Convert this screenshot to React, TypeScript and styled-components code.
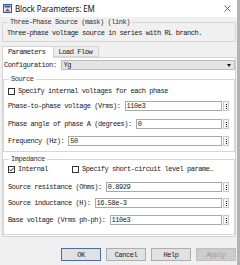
import React from "react";
import styled, { createGlobalStyle } from "styled-components";

const mono = `"Liberation Mono", "DejaVu Sans Mono", monospace`;

const GlobalStyle = createGlobalStyle`
  html, body {
    margin: 0;
    padding: 0;
    background: #f0f0f0;
  }
  body {
    width: 240px;
    height: 265px;
    overflow: hidden;
    font-family: ${mono};
    color: #1a1a1a;
  }
`;

const Window = styled.div`
  width: 240px;
  height: 265px;
  box-sizing: border-box;
  border-right: 3px solid #b3b3b3;
  display: flex;
  flex-direction: column;
  background: #f0f0f0;
`;

const TitleBar = styled.div`
  height: 17px;
  background: #ffffff;
  display: flex;
  align-items: center;
  padding: 0 6px 0 3px;
  gap: 3px;
`;

const TitleText = styled.div`
  flex: 1;
  font-family: "Noto Sans", "Liberation Sans", sans-serif;
  font-size: 8px;
  color: #111;
  letter-spacing: -0.1px;
`;

const Close = styled.div`
  width: 7px;
  height: 7px;
  display: flex;
`;

const Body = styled.div`
  flex: 1;
  display: flex;
  flex-direction: column;
  padding: 0 1px 0 2px;
`;

const Group = styled.fieldset<{ mt: number; pb: number }>`
  margin: ${({ mt }) => mt}px 0 0 0;
  padding: 0 5px ${({ pb }) => pb}px 4px;
  border: 1px solid #d6d6d6;
  min-width: 0;
  display: flex;
  flex-direction: column;
`;

const Legend = styled.legend`
  font-size: 7px;
  letter-spacing: -0.45px;
  line-height: 8px;
  padding: 0 2px;
  margin-left: 1px;
  color: #333;
`;

const Text = styled.div<{ mt?: number }>`
  font-size: 7px;
  letter-spacing: -0.45px;
  line-height: 10px;
  margin-top: ${({ mt }) => mt ?? 0}px;
  white-space: nowrap;
`;

const TabRow = styled.div`
  display: flex;
  margin-top: 4px;
  height: 11px;
  position: relative;
  z-index: 1;
`;

const Tab = styled.div<{ active?: boolean }>`
  height: ${({ active }) => (active ? 12 : 11)}px;
  box-sizing: border-box;
  padding: 0 ${({ active }) => (active ? 7 : 6)}px 0 5px;
  font-size: 7px;
  letter-spacing: -0.45px;
  line-height: 11px;
  background: ${({ active }) => (active ? "#ffffff" : "#ececec")};
  border: 1px solid #d6d6d6;
  border-bottom: ${({ active }) => (active ? "none" : "1px solid #d6d6d6")};
  margin-left: ${({ active }) => (active ? 0 : -1)}px;
`;

const Pane = styled.div`
  height: 180px;
  box-sizing: border-box;
  background: #ffffff;
  border: 1px solid #d6d6d6;
  padding: 1px 0 0 0;
  display: flex;
  flex-direction: column;
`;

const Row = styled.div<{ mt: number }>`
  display: flex;
  align-items: center;
  height: 10px;
  margin-top: ${({ mt }) => mt}px;
  white-space: nowrap;
`;

const Label = styled.span`
  font-size: 7px;
  letter-spacing: -0.45px;
  line-height: 10px;
  margin-right: 4px;
`;

const Select = styled.div`
  flex: 1;
  height: 10px;
  box-sizing: border-box;
  background: #e4e4e4;
  border: 1px solid #bcbcbc;
  display: flex;
  align-items: center;
  justify-content: space-between;
  padding: 0 3px 0 2px;
  font-size: 7px;
  letter-spacing: -0.45px;
`;

const Field = styled.div`
  flex: 1;
  height: 10px;
  box-sizing: border-box;
  background: #ffffff;
  border: 1px solid #a9a9a9;
  padding-left: 1px;
  font-size: 7px;
  letter-spacing: -0.45px;
  line-height: 8px;
`;

const Dots = styled.div`
  width: 6px;
  height: 10px;
  box-sizing: border-box;
  margin-left: 1px;
  border: 1px solid #c8c8c8;
  background: #f4f4f4;
  display: flex;
  flex-direction: column;
  align-items: center;
  justify-content: center;
  gap: 1px;
`;

const Dot = styled.span`
  width: 1px;
  height: 1px;
  background: #111;
`;

const Box = styled.span`
  width: 7px;
  height: 7px;
  box-sizing: border-box;
  border: 1px solid #333;
  background: #fff;
  margin-right: 3px;
  display: inline-flex;
  align-items: center;
  justify-content: center;
`;

const Check = ({ checked }: { checked?: boolean }) => (
  <Box>
    {checked && (
      <svg width="5" height="5" viewBox="0 0 5 5">
        <path d="M0.5 2.5 L2 4 L4.5 0.8" stroke="#222" strokeWidth="0.9" fill="none" />
      </svg>
    )}
  </Box>
);

const Spacer = styled.span<{ w: number }>`
  width: ${({ w }) => w}px;
  flex: none;
`;

const Buttons = styled.div`
  display: flex;
  justify-content: flex-end;
  gap: 5px;
  margin-top: 11px;
`;

const Button = styled.div<{ primary?: boolean; disabled?: boolean }>`
  width: 40px;
  height: 13px;
  box-sizing: border-box;
  background: ${({ disabled }) => (disabled ? "#cccccc" : "#e1e1e1")};
  border: 1px solid ${({ primary, disabled }) => (primary ? "#4a6f9c" : disabled ? "#bfbfbf" : "#adadad")};
  color: ${({ disabled }) => (disabled ? "#9a9a9a" : "#222")};
  font-size: 7px;
  letter-spacing: -0.45px;
  display: flex;
  align-items: center;
  justify-content: center;
`;

const Param = ({ label, value, mt }: { label: string; value: string; mt: number }) => (
  <Row mt={mt}>
    <Label>{label}</Label>
    <Field>{value}</Field>
    <Dots>
      <Dot />
      <Dot />
      <Dot />
    </Dots>
  </Row>
);

const AppIcon = () => (
  <svg width="9" height="9" viewBox="0 0 9 9">
    <rect x="0.5" y="0.5" width="8" height="8" fill="#dfe9f5" stroke="#2f5f9e" />
    <rect x="1.5" y="1.5" width="6" height="2" fill="#2f5f9e" />
    <path d="M2 7.5 L4.5 4.2 L7 7.5 Z" fill="#d03a2a" />
  </svg>
);

export default function App() {
  return (
    <Window>
      <GlobalStyle />
      <TitleBar>
        <AppIcon />
        <TitleText>Block Parameters: EM</TitleText>
        <Close>
          <svg width="7" height="7" viewBox="0 0 7 7">
            <path d="M0.5 0.5 L6.5 6.5 M6.5 0.5 L0.5 6.5" stroke="#444" strokeWidth="0.8" />
          </svg>
        </Close>
      </TitleBar>
      <Body>
        <Group mt={1} pb={3}>
          <Legend>Three-Phase Source (mask) (link)</Legend>
          <Text mt={2}>Three-phase voltage source in series with RL branch.</Text>
        </Group>
        <TabRow>
          <Tab active>Parameters</Tab>
          <Tab>Load Flow</Tab>
        </TabRow>
        <Pane>
          <Row mt={1} style={{ paddingLeft: 1 }}>
            <Label>Configuration:</Label>
            <Select>
              <span>Yg</span>
              <svg width="4" height="3" viewBox="0 0 4 3">
                <path d="M0 0 H4 L2 3 Z" fill="#111" />
              </svg>
            </Select>
          </Row>
          <Group mt={5} pb={5}>
            <Legend>Source</Legend>
            <Row mt={3}>
              <Check />
              <Label>Specify internal voltages for each phase</Label>
            </Row>
            <Param mt={5} label="Phase-to-phase voltage (Vrms):" value="110e3" />
            <Param mt={8} label="Phase angle of phase A (degrees):" value="0" />
            <Param mt={7} label="Frequency (Hz):" value="50" />
          </Group>
          <Group mt={3} pb={9}>
            <Legend>Impedance</Legend>
            <Row mt={1}>
              <Check checked />
              <Label>Internal</Label>
              <Spacer w={20} />
              <Check />
              <Label>Specify short-circuit level parame…</Label>
            </Row>
            <Param mt={8} label="Source resistance (Ohms):" value="0.8929" />
            <Param mt={6} label="Source inductance (H):" value="16.58e-3" />
            <Param mt={7} label="Base voltage (Vrms ph-ph):" value="110e3" />
          </Group>
        </Pane>
        <Buttons>
          <Button primary>OK</Button>
          <Button>Cancel</Button>
          <Button>Help</Button>
          <Button disabled>Apply</Button>
        </Buttons>
      </Body>
    </Window>
  );
}
